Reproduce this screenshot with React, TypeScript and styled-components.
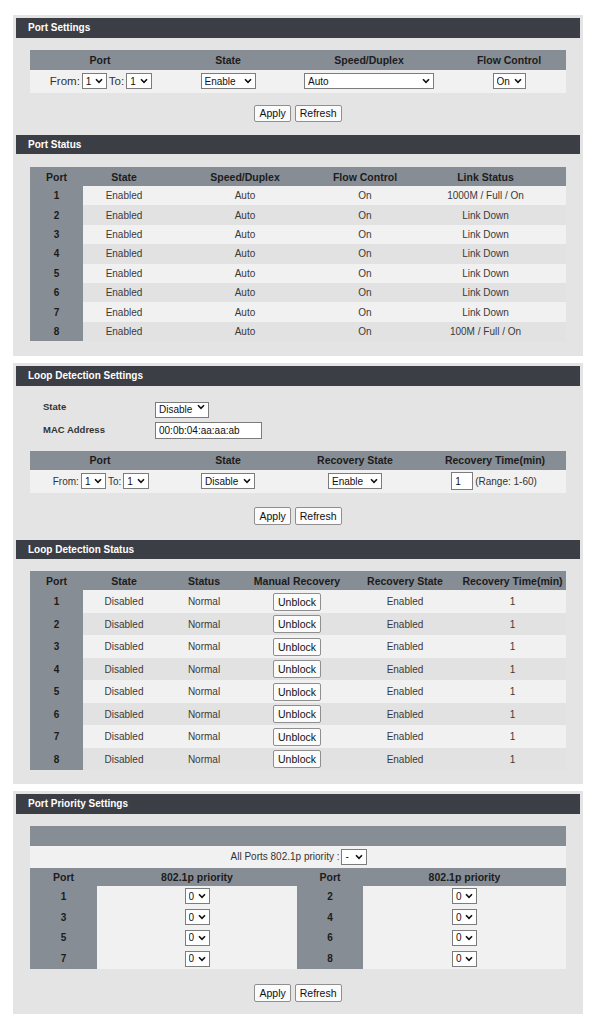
import React from "react";
import styled, { createGlobalStyle } from "styled-components";

const Global = createGlobalStyle`
  html, body {
    margin: 0;
    padding: 0;
    background: #fff;
    font-family: "Liberation Sans", Arial, sans-serif;
    color: #333;
  }
`;

const Page = styled.div`
  width: 570px;
  padding: 15px 0 14px 13px;
  display: flex;
  flex-direction: column;
  gap: 7px;
`;

const Group = styled.div`
  background: #e4e4e4;
  padding: 3px 3px 0;
`;

const Title = styled.div`
  height: 19.5px;
  line-height: 19.5px;
  background: #3b3e44;
  color: #fff;
  font-weight: 700;
  font-size: 10px;
  padding-left: 12px;
`;

const Body = styled.div<{ $top?: number; $bottom?: number }>`
  padding: ${(p) => p.$top ?? 12}px 14px ${(p) => p.$bottom ?? 13}px;
  display: flex;
  flex-direction: column;
`;

const Table = styled.table`
  width: 100%;
  border-collapse: collapse;
  table-layout: fixed;
  font-size: 10px;
`;

const Col = styled.col<{ $w: number }>`
  width: ${(p) => p.$w}px;
`;

const HeadRow = styled.tr<{ $h?: number }>`
  height: ${(p) => p.$h ?? 19}px;
`;

const Th = styled.th`
  background: #878d94;
  color: #1c1c1c;
  font-weight: 700;
  font-size: 10.5px;
  text-align: center;
  padding: 0;
`;

const Row = styled.tr<{ $h: number; $alt?: boolean }>`
  height: ${(p) => p.$h}px;
  background: ${(p) => (p.$alt ? "#e2e2e2" : "#f1f1f1")};
`;

const Td = styled.td`
  text-align: center;
  padding: 0;
  color: #3a3a3a;
  white-space: nowrap;
`;

const PortTd = styled.td`
  text-align: center;
  padding: 0;
  background: #878d94;
  color: #1c1c1c;
  font-weight: 700;
`;

const RangeText = styled.span<{ $size?: number }>`
  font-size: ${(p) => p.$size ?? 10}px;
  color: #333;
  margin: 0 2px;
  vertical-align: middle;
`;

const SelectBox = styled.span<{ $w: number }>`
  position: relative;
  display: inline-block;
  width: ${(p) => p.$w}px;
  height: 16px;
  vertical-align: middle;

  select {
    appearance: none;
    -webkit-appearance: none;
    width: 100%;
    height: 100%;
    margin: 0;
    border: 1px solid #7c7c7c;
    border-radius: 0;
    background: #fff;
    font-family: "Liberation Sans", Arial, sans-serif;
    font-size: 10px;
    color: #111;
    padding: 0 12px 0 3px;
    box-sizing: border-box;
  }
`;

const Chevron = styled.svg`
  position: absolute;
  right: 4px;
  top: 5px;
  pointer-events: none;
`;

const TextInput = styled.input<{ $w: number; $h?: number }>`
  width: ${(p) => p.$w}px;
  height: ${(p) => p.$h ?? 17}px;
  box-sizing: border-box;
  border: 1px solid #7c7c7c;
  border-radius: 0;
  background: #fff;
  font-family: "Liberation Sans", Arial, sans-serif;
  font-size: 10px;
  color: #111;
  padding: 0 3px;
  margin: 0;
  vertical-align: middle;
`;

const Buttons = styled.div<{ $top: number }>`
  display: flex;
  justify-content: center;
  gap: 4px;
  margin-top: ${(p) => p.$top}px;
`;

const Button = styled.button<{ $h?: number; $w?: number }>`
  height: ${(p) => p.$h ?? 18}px;
  ${(p) => (p.$w ? `width: ${p.$w}px;` : "")}
  padding: 0 4px;
  border: 1px solid #8f8f8f;
  border-radius: 2px;
  background: #fbfbfb;
  font-family: "Liberation Sans", Arial, sans-serif;
  font-size: 10.5px;
  color: #111;
  vertical-align: middle;
`;

const Form = styled.div`
  display: grid;
  grid-template-columns: 112px 1fr;
  row-gap: 5px;
  padding-left: 13px;
  align-items: center;
  margin-bottom: 12px;
`;

const Label = styled.span`
  font-size: 9.5px;
  font-weight: 700;
  color: #333;
`;

function Select({ value, width }: { value: string; width: number }) {
  return (
    <SelectBox $w={width}>
      <select defaultValue={value}>
        <option>{value}</option>
      </select>
      <Chevron width="8" height="6" viewBox="0 0 8 6">
        <path d="M1 1.2 L4 4.3 L7 1.2" fill="none" stroke="#111" strokeWidth="1.6" />
      </Chevron>
    </SelectBox>
  );
}

const ports = [1, 2, 3, 4, 5, 6, 7, 8];

function PortSettings() {
  return (
    <>
      <Title>Port Settings</Title>
      <Body>
        <Table>
          <colgroup>
            <Col $w={140} />
            <Col $w={116} />
            <Col $w={166} />
            <Col $w={114} />
          </colgroup>
          <tbody>
            <HeadRow $h={20}>
              <Th>Port</Th>
              <Th>State</Th>
              <Th>Speed/Duplex</Th>
              <Th>Flow Control</Th>
            </HeadRow>
            <Row $h={23}>
              <Td>
                <RangeText $size={11.5}>From:</RangeText>
                <Select value="1" width={25} />
                <RangeText $size={11.5}>To:</RangeText>
                <Select value="1" width={26} />
              </Td>
              <Td>
                <Select value="Enable" width={55} />
              </Td>
              <Td>
                <Select value="Auto" width={130} />
              </Td>
              <Td>
                <Select value="On" width={33} />
              </Td>
            </Row>
          </tbody>
        </Table>
        <Buttons $top={12}>
          <Button $h={17}>Apply</Button>
          <Button $h={17}>Refresh</Button>
        </Buttons>
      </Body>
    </>
  );
}

function PortStatus() {
  return (
    <>
      <Title>Port Status</Title>
      <Body $top={13} $bottom={15}>
        <Table>
          <colgroup>
            <Col $w={53} />
            <Col $w={82} />
            <Col $w={160} />
            <Col $w={80} />
            <Col $w={161} />
          </colgroup>
          <tbody>
            <HeadRow $h={19}>
              <Th>Port</Th>
              <Th>State</Th>
              <Th>Speed/Duplex</Th>
              <Th>Flow Control</Th>
              <Th>Link Status</Th>
            </HeadRow>
            {ports.map((p, i) => (
              <Row key={p} $h={19.4} $alt={i % 2 === 1}>
                <PortTd>{p}</PortTd>
                <Td>Enabled</Td>
                <Td>Auto</Td>
                <Td>On</Td>
                <Td>{p === 1 ? "1000M / Full / On" : p === 8 ? "100M / Full / On" : "Link Down"}</Td>
              </Row>
            ))}
          </tbody>
        </Table>
      </Body>
    </>
  );
}

function LoopSettings() {
  return (
    <>
      <Title>Loop Detection Settings</Title>
      <Body $bottom={15}>
        <Form>
          <Label>State</Label>
          <div>
            <Select value="Disable" width={54} />
          </div>
          <Label>MAC Address</Label>
          <div>
            <TextInput $w={107} defaultValue="00:0b:04:aa:aa:ab" />
          </div>
        </Form>
        <Table>
          <colgroup>
            <Col $w={140} />
            <Col $w={116} />
            <Col $w={138} />
            <Col $w={142} />
          </colgroup>
          <tbody>
            <HeadRow $h={19}>
              <Th>Port</Th>
              <Th>State</Th>
              <Th>Recovery State</Th>
              <Th>Recovery Time(min)</Th>
            </HeadRow>
            <Row $h={23}>
              <Td>
                <RangeText>From:</RangeText>
                <Select value="1" width={25} />
                <RangeText>To:</RangeText>
                <Select value="1" width={26} />
              </Td>
              <Td>
                <Select value="Disable" width={54} />
              </Td>
              <Td>
                <Select value="Enable" width={54} />
              </Td>
              <Td>
                <TextInput $w={22} $h={18} defaultValue="1" />
                <RangeText>(Range: 1-60)</RangeText>
              </Td>
            </Row>
          </tbody>
        </Table>
        <Buttons $top={14}>
          <Button>Apply</Button>
          <Button>Refresh</Button>
        </Buttons>
      </Body>
    </>
  );
}

function LoopStatus() {
  return (
    <>
      <Title>Loop Detection Status</Title>
      <Body $bottom={14}>
        <Table>
          <colgroup>
            <Col $w={53} />
            <Col $w={82} />
            <Col $w={78} />
            <Col $w={108} />
            <Col $w={108} />
            <Col $w={107} />
          </colgroup>
          <tbody>
            <HeadRow $h={19}>
              <Th>Port</Th>
              <Th>State</Th>
              <Th>Status</Th>
              <Th>Manual Recovery</Th>
              <Th>Recovery State</Th>
              <Th>Recovery Time(min)</Th>
            </HeadRow>
            {ports.map((p, i) => (
              <Row key={p} $h={22.5} $alt={i % 2 === 1}>
                <PortTd>{p}</PortTd>
                <Td>Disabled</Td>
                <Td>Normal</Td>
                <Td>
                  <Button $w={48}>Unblock</Button>
                </Td>
                <Td>Enabled</Td>
                <Td>1</Td>
              </Row>
            ))}
          </tbody>
        </Table>
      </Body>
    </>
  );
}

function PrioritySettings() {
  const pairs = [
    [1, 2],
    [3, 4],
    [5, 6],
    [7, 8],
  ];
  return (
    <>
      <Title>Port Priority Settings</Title>
      <Body $bottom={12}>
        <Table>
          <colgroup>
            <Col $w={67} />
            <Col $w={200} />
            <Col $w={66} />
            <Col $w={203} />
          </colgroup>
          <tbody>
            <HeadRow $h={20}>
              <Th colSpan={4} />
            </HeadRow>
            <Row $h={22}>
              <Td colSpan={4}>
                <RangeText>All Ports 802.1p priority :</RangeText>
                <Select value="-" width={26} />
              </Td>
            </Row>
            <HeadRow $h={18}>
              <Th>Port</Th>
              <Th>802.1p priority</Th>
              <Th>Port</Th>
              <Th>802.1p priority</Th>
            </HeadRow>
            {pairs.map(([a, b]) => (
              <Row key={a} $h={20.75}>
                <PortTd>{a}</PortTd>
                <Td>
                  <Select value="0" width={25} />
                </Td>
                <PortTd>{b}</PortTd>
                <Td>
                  <Select value="0" width={25} />
                </Td>
              </Row>
            ))}
          </tbody>
        </Table>
        <Buttons $top={15}>
          <Button>Apply</Button>
          <Button>Refresh</Button>
        </Buttons>
      </Body>
    </>
  );
}

export default function App() {
  return (
    <>
      <Global />
      <Page>
        <Group>
          <PortSettings />
          <PortStatus />
        </Group>
        <Group>
          <LoopSettings />
          <LoopStatus />
        </Group>
        <Group>
          <PrioritySettings />
        </Group>
      </Page>
    </>
  );
}
